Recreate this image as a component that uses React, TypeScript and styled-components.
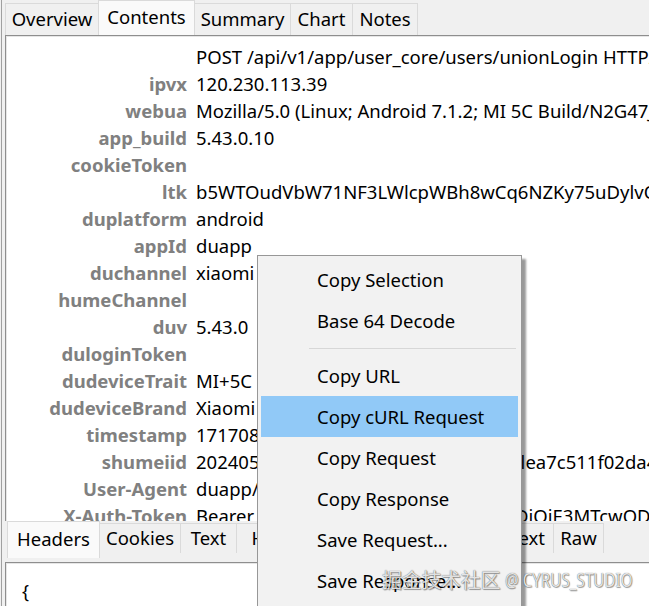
import React from "react";
import styled, { createGlobalStyle } from "styled-components";

const Global = createGlobalStyle`
  html, body { margin: 0; padding: 0; background: #f0f0f0; }
  body { font-family: "Noto Sans", "Noto Sans CJK SC", sans-serif; font-size: 18.5px; color: #000; }
  #root { width: 649px; height: 606px; overflow: hidden; }
`;

const Frame = styled.div`
  position: relative;
  box-sizing: border-box;
  width: 648px;
  height: 606px;
  margin-left: 1px;
  border-left: 1px solid #a0a0a0;
  padding-left: 3px;
  display: flex;
  flex-direction: column;
  overflow: hidden;
`;

const TabStrip = styled.div<{ $h: number; $pad?: number }>`
  display: flex;
  align-items: flex-start;
  height: ${(p) => p.$h}px;
  padding-left: ${(p) => p.$pad ?? 0}px;
  flex: none;
  background: #f0f0f0;
`;

const Tab = styled.div<{ $w: number; $active?: boolean; $top: number; $h: number }>`
  box-sizing: border-box;
  width: ${(p) => p.$w}px;
  height: ${(p) => p.$h}px;
  margin-top: ${(p) => p.$top}px;
  flex: none;
  display: flex;
  align-items: center;
  justify-content: center;
  white-space: nowrap;
  background: ${(p) => (p.$active ? "#fafafa" : "#f0f0f0")};
  border: 1px solid #dadada;
  border-bottom: none;
  margin-right: -1px;
  line-height: 1;
  padding-bottom: 1px;
`;

const Panel = styled.div`
  box-sizing: border-box;
  flex: none;
  min-height: 0;
  background: #fff;
  border-top: 1px solid #8e8e8e;
  border-left: 1px solid #8e8e8e;
  box-shadow: inset 1px 1px 0 #e6e6e6;
  overflow: hidden;
`;

const UpperPanel = styled(Panel)`
  height: 486px;
  padding-top: 7px;
`;

const Rows = styled.div`
  display: grid;
  grid-template-columns: 181px 1fr;
  column-gap: 9px;
  grid-auto-rows: 27px;
  line-height: 27px;
`;

const Key = styled.div`
  text-align: right;
  font-weight: 700;
  color: #808080;
  white-space: nowrap;
`;

const Val = styled.div`
  white-space: nowrap;
  overflow: hidden;
  color: #000;
`;

const LowerPanel = styled(Panel)`
  height: 44px;
  padding: 14px 0 0 16px;
  line-height: 27px;
`;

const Menu = styled.div`
  position: absolute;
  left: 255px;
  top: 255px;
  width: 265px;
  height: 380px;
  box-sizing: border-box;
  background: #f2f2f2;
  border: 1px solid #979797;
  padding: 3px;
  box-shadow: 4px 4px 2px rgba(0, 0, 0, 0.4);
`;

const Item = styled.div<{ $hot?: boolean }>`
  height: 41px;
  line-height: 41px;
  padding-left: 56px;
  white-space: nowrap;
  background: ${(p) => (p.$hot ? "#91c9f7" : "transparent")};
`;

const Separator = styled.div`
  height: 14px;
  display: flex;
  align-items: center;
  padding-left: 48px;
  padding-right: 2px;
  &::after {
    content: "";
    flex: 1;
    height: 1px;
    background: #d7d7d7;
  }
`;

const Watermark = styled.div`
  position: absolute;
  left: 380px;
  top: 565px;
  display: flex;
  align-items: center;
  height: 28px;
  white-space: nowrap;
  color: rgba(255, 255, 255, 0.85);
  text-shadow: 0 0 1px rgba(0, 0, 0, 0.7), 1px 1px 1px rgba(0, 0, 0, 0.35);
`;

const WaterCjk = styled.span`
  font-family: "Noto Sans CJK SC", sans-serif;
  font-size: 20px;
  letter-spacing: -0.3px;
`;

const WaterLatin = styled.span`
  display: inline-block;
  font-family: "Noto Sans", sans-serif;
  font-size: 19.5px;
  margin-left: 5px;
  transform: scaleX(0.78);
  transform-origin: left center;
`;

const topTabs = [
  { t: "Overview", w: 94 },
  { t: "Contents", w: 97, a: true },
  { t: "Summary", w: 97 },
  { t: "Chart", w: 63 },
  { t: "Notes", w: 66 },
];

const bottomTabs = [
  { t: "Headers", w: 93, a: true },
  { t: "Cookies", w: 82 },
  { t: "Text", w: 57 },
  { t: "HexView", w: 105 },
  { t: "JSON", w: 65 },
  { t: "XML", w: 55 },
  { t: "PlainText", w: 96 },
  { t: "Raw", w: 51 },
];

const rows: [string, string][] = [
  ["", "POST /api/v1/app/user_core/users/unionLogin HTTP/1.1"],
  ["ipvx", "120.230.113.39"],
  ["webua", "Mozilla/5.0 (Linux; Android 7.1.2; MI 5C Build/N2G47J; wv) AppleWebKit/537.36"],
  ["app_build", "5.43.0.10"],
  ["cookieToken", ""],
  ["ltk", "b5WTOudVbW71NF3LWlcpWBh8wCq6NZKy75uDylvQkR2m"],
  ["duplatform", "android"],
  ["appId", "duapp"],
  ["duchannel", "xiaomi"],
  ["humeChannel", ""],
  ["duv", "5.43.0"],
  ["duloginToken", ""],
  ["dudeviceTrait", "MI+5C"],
  ["dudeviceBrand", "Xiaomi"],
  ["timestamp", "1717086385123"],
  ["shumeiid", "202405300936479c2a9fd53e6b8d4cfflea7c511f02da4b8e1c0f"],
  ["User-Agent", "duapp/5.43.0(android;7.1.2)"],
  ["X-Auth-Token", "Bearer eyJhbGciOiJSUzI1NiJ9.eyJnpYXDiOiE3MTcwODk2Mzg1fQ"],
];

export default function App() {
  return (
    <>
      <Global />
      <Frame>
        <TabStrip $h={35}>
          {topTabs.map((t) => (
            <Tab key={t.t} $w={t.w} $active={t.a} $top={t.a ? 0 : 3} $h={t.a ? 35 : 32}>
              {t.t}
            </Tab>
          ))}
        </TabStrip>
        <UpperPanel>
          <Rows>
            {rows.map(([k, v], i) => (
              <React.Fragment key={i}>
                <Key>{k}</Key>
                <Val>{v}</Val>
              </React.Fragment>
            ))}
          </Rows>
        </UpperPanel>
        <TabStrip $h={41} $pad={2}>
          {bottomTabs.map((t) => (
            <Tab key={t.t} $w={t.w} $active={t.a} $top={t.a ? 0 : 2} $h={t.a ? 37 : 30}>
              {t.t}
            </Tab>
          ))}
        </TabStrip>
        <LowerPanel>{"{"}</LowerPanel>
        <Menu>
          <Item>Copy Selection</Item>
          <Item>Base 64 Decode</Item>
          <Separator />
          <Item>Copy URL</Item>
          <Item $hot>Copy cURL Request</Item>
          <Item>Copy Request</Item>
          <Item>Copy Response</Item>
          <Item>Save Request...</Item>
          <Item>Save Response...</Item>
        </Menu>
        <Watermark>
          <WaterCjk>掘金技术社区</WaterCjk>
          <WaterLatin>@ CYRUS_STUDIO</WaterLatin>
        </Watermark>
      </Frame>
    </>
  );
}
